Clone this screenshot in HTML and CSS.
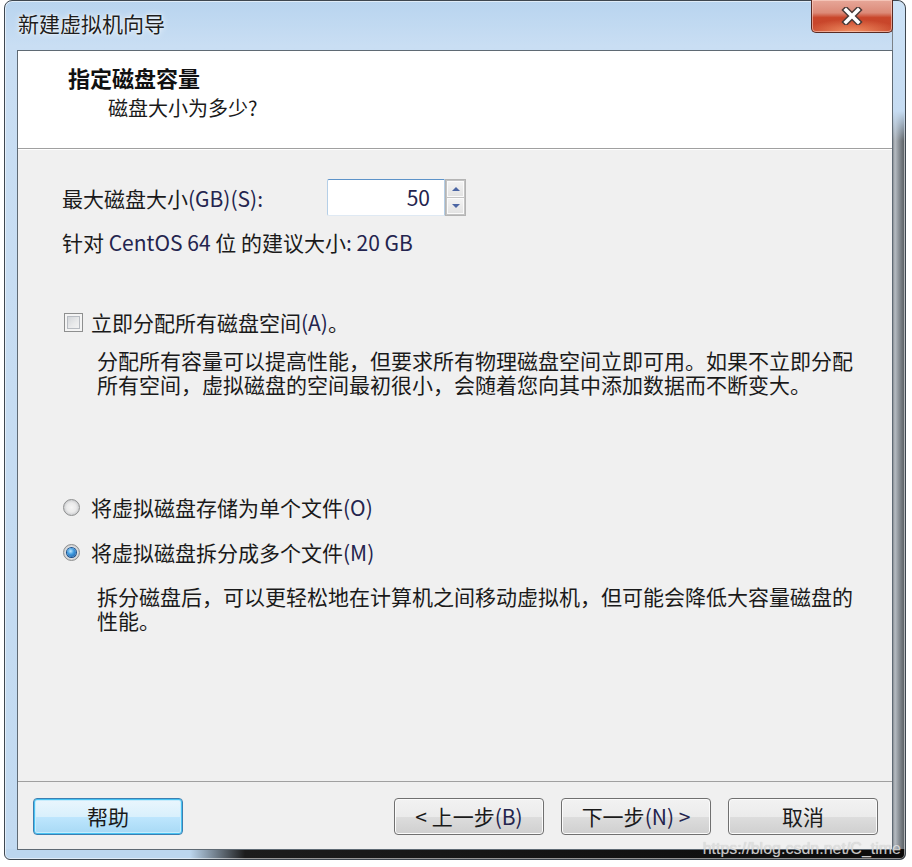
FILE: index.html
```html
<!DOCTYPE html>
<html lang="zh-CN">
<head>
<meta charset="utf-8">
<title>新建虚拟机向导</title>
<link rel="stylesheet" href="styles.css">
</head>
<body>
<div class="window">
  <div class="titlebar">
    <span class="title">新建虚拟机向导</span>
    <button class="close" type="button" aria-label="关闭">
      <svg width="22" height="18" viewBox="0 0 22 18">
        <path d="M5 3 L17 15 M17 3 L5 15" stroke="#4a3b38" stroke-width="6.5" stroke-linecap="square" fill="none"/>
        <path d="M5 3 L17 15 M17 3 L5 15" stroke="#ffffff" stroke-width="3.6" stroke-linecap="square" fill="none"/>
      </svg>
    </button>
  </div>
  <div class="client">
    <div class="header">
      <div class="h-title">指定磁盘容量</div>
      <div class="h-sub">磁盘大小为多少?</div>
    </div>
    <div class="content">
      <div class="size-row">
        <span class="size-label">最大磁盘大小<span class="lat">(GB)(S):</span></span>
        <div class="spin">
          <div class="spin-input"><span class="lat">50</span></div>
          <div class="spin-btns">
            <span class="sb sb-up"></span>
            <span class="sb sb-down"></span>
          </div>
        </div>
      </div>
      <div class="rec">针对 <span class="lat">CentOS 64</span> 位 的建议大小<span class="lat">: 20 GB</span></div>
      <div class="opt opt-check"><span class="checkbox"></span><span>立即分配所有磁盘空间<span class="lat">(A)</span>。</span></div>
      <p class="desc">分配所有容量可以提高性能，但要求所有物理磁盘空间立即可用。如果不立即分配所有空间，虚拟磁盘的空间最初很小，会随着您向其中添加数据而不断变大。</p>
      <div class="opt opt-radio opt-first"><span class="radio"></span><span>将虚拟磁盘存储为单个文件<span class="lat">(O)</span></span></div>
      <div class="opt opt-radio opt-second"><span class="radio radio-on"></span><span>将虚拟磁盘拆分成多个文件<span class="lat">(M)</span></span></div>
      <p class="desc desc-2">拆分磁盘后，可以更轻松地在计算机之间移动虚拟机，但可能会降低大容量磁盘的性能。</p>
    </div>
    <div class="footer">
      <button class="btn btn-help" type="button">帮助</button>
      <div class="nav">
        <button class="btn" type="button">&lt; 上一步<span class="lat">(B)</span></button>
        <button class="btn" type="button">下一步<span class="lat">(N) &gt;</span></button>
        <button class="btn" type="button">取消</button>
      </div>
    </div>
  </div>
  <div class="watermark">https://blog.csdn.net/C_time</div>
</div>
</body>
</html>
```
FILE: styles.css
```css
html, body {
  margin: 0;
  padding: 0;
}
body {
  width: 912px;
  height: 867px;
  overflow: hidden;
  background: #ffffff;
  font-family: "Noto Sans CJK SC", "Noto Sans", sans-serif;
  color: #1a1a1a;
}

.window {
  position: relative;
  box-sizing: border-box;
  margin-left: 4px;
  width: 902px;
  height: 860px;
  border: 1px solid #3e4750;
  border-radius: 8px 8px 6px 6px;
  padding: 0 12px 9px 12px;
  display: flex;
  flex-direction: column;
  box-shadow: inset 0 0 0 1px rgba(255, 255, 255, 0.55);
  background:
    linear-gradient(to right, #bcd6ee 0, #bcd6ee 185px, #1c1c1c 240px, #0b0b0b 100%) left bottom / 100% 10px no-repeat,
    linear-gradient(to right, #70767c 0, #b6bcc2 3px, #8a9096 7px, #5c6166 12px) right top / 13px 100% no-repeat,
    linear-gradient(180deg, #b8d4ef 0, #c9def3 45px, #c2daf1 100%);
}
.window::after {
  content: "";
  position: absolute;
  right: 0;
  top: 0;
  width: 12px;
  height: 140px;
  background: linear-gradient(180deg, #cde2f6 0, #c6dcf2 110px, rgba(198, 220, 242, 0) 140px);
  border-radius: 0 8px 0 0;
}

.titlebar {
  height: 49px;
  display: flex;
  justify-content: space-between;
  align-items: flex-start;
  flex: none;
}
.title {
  margin: 9px 0 0 1px;
  font-size: 21px;
  line-height: 26px;
  color: #1e1e1e;
  text-shadow: 0 0 6px rgba(255, 255, 255, 0.95), 0 0 2px rgba(255, 255, 255, 0.9);
}
.close {
  position: relative;
  z-index: 1;
  margin-top: -1px;
  width: 82px;
  height: 33px;
  padding: 0;
  border: 1px solid #5a2a22;
  border-top: none;
  border-radius: 0 0 5px 5px;
  display: flex;
  align-items: center;
  justify-content: center;
  background:
    radial-gradient(ellipse 60% 40% at 50% 100%, rgba(255, 170, 120, 0.75), rgba(255, 170, 120, 0) 100%),
    linear-gradient(180deg, #e7a799 0, #dc8a78 40%, #c9462b 55%, #c7452a 100%);
  box-shadow: inset 0 0 0 1px rgba(255, 220, 210, 0.55);
}
.close svg {
  display: block;
}

.client {
  position: relative;
  z-index: 1;
  flex: 1;
  display: flex;
  flex-direction: column;
  border: 1px solid #5f6a74;
  background: #f0f0f0;
}

.header {
  flex: none;
  height: 98px;
  box-sizing: border-box;
  padding: 12px 0 0 50px;
  background: #ffffff;
  border-bottom: 1px solid #a0a0a0;
}
.h-title {
  font-size: 22px;
  font-weight: 700;
  line-height: 28px;
  color: #111111;
}
.h-sub {
  margin-left: 40px;
  margin-top: 2px;
  font-size: 20px;
  line-height: 30px;
}

.content {
  flex: 1;
  padding: 29px 0 0 44px;
  font-size: 21px;
  border-top: 1px solid #ffffff;
}
.lat {
  color: #24244e;
}

.size-row {
  display: flex;
  align-items: center;
  height: 37px;
}
.size-label {
  width: 265px;
  line-height: 28px;
}
.spin {
  display: flex;
  height: 37px;
}
.spin-input {
  box-sizing: border-box;
  width: 118px;
  height: 37px;
  padding-right: 14px;
  text-align: right;
  line-height: 34px;
  background: #ffffff;
  border: 1px solid #b5cfe7;
  border-top-color: #5d93c9;
  border-bottom-color: #dfe9f3;
  border-radius: 2px 0 0 2px;
}
.spin-btns {
  box-sizing: border-box;
  width: 21px;
  height: 37px;
  display: flex;
  flex-direction: column;
  gap: 1px;
  padding: 1px;
  background: #c4c4c4;
  border: 1px solid #b4b4b4;
}
.sb {
  flex: 1;
  display: flex;
  align-items: center;
  justify-content: center;
  background: linear-gradient(180deg, #f4f4f4, #e2e2e2);
  box-shadow: inset 0 0 0 1px #fbfbfb;
}
.sb::before {
  content: "";
  width: 0;
  height: 0;
  border-left: 4px solid transparent;
  border-right: 4px solid transparent;
}
.sb-up::before {
  border-bottom: 4px solid #4c66a4;
}
.sb-down::before {
  border-top: 4px solid #4c66a4;
}

.rec {
  margin-top: 12px;
  line-height: 28px;
}

.opt {
  display: flex;
  align-items: center;
  line-height: 28px;
}
.opt-check {
  margin-top: 52px;
}
.checkbox {
  box-sizing: border-box;
  width: 19px;
  height: 19px;
  margin: 0 8px 0 2px;
  border: 1px solid #8e8f8f;
  background: linear-gradient(135deg, #c9cdd2 0, #e9eaeb 55%, #f8f8f8 100%);
  box-shadow: inset 0 0 0 2px #f4f4f4, inset 0 0 0 3px #b8bcc2;
}
.opt-first {
  margin-top: 97px;
}
.opt-second {
  margin-top: 17px;
}
.radio {
  box-sizing: border-box;
  width: 17px;
  height: 17px;
  margin: 0 11px 0 1px;
  border-radius: 50%;
  border: 1px solid #8e8f8f;
  background: radial-gradient(circle at 50% 50%, #f5f5f5 0, #eaeaea 45%, #c9cbce 75%, #f2f2f2 100%);
  display: flex;
  align-items: center;
  justify-content: center;
}
.radio-on::after {
  content: "";
  width: 9px;
  height: 9px;
  border-radius: 50%;
  background: radial-gradient(circle at 40% 35%, #bfe8ff 0, #3f9be0 40%, #174f97 100%);
  box-shadow: 0 0 0 1px #1b4f8a;
}

.desc {
  margin: 12px 0 0 35px;
  width: 36.4em;
  line-height: 24px;
}
.desc-2 {
  margin-top: 18px;
}

.footer {
  flex: none;
  height: 68px;
  box-sizing: border-box;
  padding: 16px 14px 0 15px;
  display: flex;
  justify-content: space-between;
  align-items: flex-start;
  border-top: 1px solid #a0a0a0;
}
.nav {
  display: flex;
  gap: 17px;
}
.btn {
  box-sizing: border-box;
  width: 150px;
  height: 37px;
  padding: 0;
  font-family: "Noto Sans CJK SC", "Noto Sans", sans-serif;
  font-size: 21px;
  line-height: 33px;
  color: #1a1a1a;
  border: 1px solid #707070;
  border-radius: 4px;
  background: linear-gradient(180deg, #f2f2f2 0, #ebebeb 50%, #dddddd 51%, #cfcfcf 100%);
  box-shadow: inset 0 0 0 1px #fbfbfb;
}
.btn-help {
  border-color: #3c7fb1;
  background: linear-gradient(180deg, #eaf6fd 0, #d9f0fc 50%, #bee6fd 51%, #a7d9f5 100%);
  box-shadow: inset 0 0 0 1px #48c3f3, inset 0 0 0 2px #c7ecfc;
}

.watermark {
  position: absolute;
  right: 4px;
  bottom: 0;
  z-index: 2;
  font-family: "Liberation Sans", Arial, sans-serif;
  font-size: 16px;
  line-height: 20px;
  color: rgba(228, 228, 228, 0.85);
  text-shadow: 0 0 1px rgba(120, 120, 120, 0.4);
}
```
